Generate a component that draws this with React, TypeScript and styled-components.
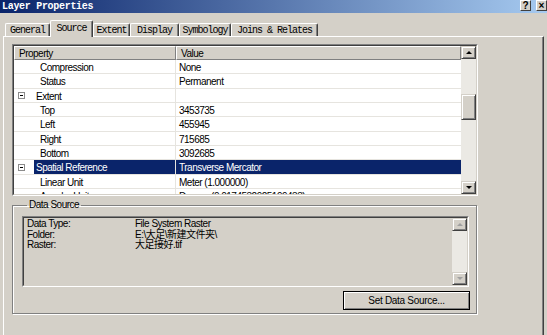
import styled, { createGlobalStyle, css } from "styled-components";

type PropRow = {
  label: string;
  value?: string;
  kind: "group" | "item";
  selected?: boolean;
};

const rows: PropRow[] = [
  { label: "Compression", value: "None", kind: "item" },
  { label: "Status", value: "Permanent", kind: "item" },
  { label: "Extent", kind: "group" },
  { label: "Top", value: "3453735", kind: "item" },
  { label: "Left", value: "455945", kind: "item" },
  { label: "Right", value: "715685", kind: "item" },
  { label: "Bottom", value: "3092685", kind: "item" },
  { label: "Spatial Reference", value: "Transverse Mercator", kind: "group", selected: true },
  { label: "Linear Unit", value: "Meter (1.000000)", kind: "item" },
  { label: "Angular Unit", value: "Degree (0.0174532925199433)", kind: "item" },
];

const tabs = [
  { name: "General", width: 45 },
  { name: "Source", width: 43, active: true },
  { name: "Extent", width: 37 },
  { name: "Display", width: 49 },
  { name: "Symbology", width: 52 },
  { name: "Joins & Relates", width: 87 },
];

const sourceInfo = [
  ["Data Type:", "File System Raster"],
  ["Folder:", "E:\\大足\\新建文件夹\\"],
  ["Raster:", "大足接好.tif"],
];

const App = () => {
  return (
    <>
      <GlobalStyle />
      <Dialog>
        <TitleBar>
          <Title>Layer Properties</Title>
          <CaptionButtons>
            <CaptionButton>?</CaptionButton>
            <CaptionButton>×</CaptionButton>
          </CaptionButtons>
        </TitleBar>

        <TabStrip>
          {tabs.map(tab => (
            <Tab key={tab.name} $w={tab.width} $active={tab.active}>
              {tab.name}
            </Tab>
          ))}
        </TabStrip>

        <Panel>
          <GridFrame>
            <GridInner>
              <GridList>
                <HeaderRow>
                  <HeaderCell>Property</HeaderCell>
                  <HeaderCell>Value</HeaderCell>
                </HeaderRow>
                {rows.map(row => (
                  <Row key={row.label}>
                    <NameCell>
                      <ToggleSlot>{row.kind === "group" && <Expander />}</ToggleSlot>
                      <NameText $group={row.kind === "group"} $selected={row.selected}>
                        {row.label}
                      </NameText>
                    </NameCell>
                    <ValueCell $selected={row.selected}>{row.value}</ValueCell>
                  </Row>
                ))}
              </GridList>
              <ScrollBar>
                <ScrollButton>
                  <Arrow $dir="up" />
                </ScrollButton>
                <Thumb />
                <ScrollTrack />
                <ScrollButton>
                  <Arrow $dir="down" />
                </ScrollButton>
              </ScrollBar>
            </GridInner>
          </GridFrame>

          <GroupBox>
            <GroupLegend>Data Source</GroupLegend>
            <InfoFrame>
              <InfoInner>
                <InfoText>
                  {sourceInfo.map(([k, v]) => (
                    <InfoLine key={k}>
                      <span>{k}</span>
                      <span>{v}</span>
                    </InfoLine>
                  ))}
                </InfoText>
                <ScrollBar>
                  <ScrollButton>
                    <Arrow $dir="up" $disabled />
                  </ScrollButton>
                  <ScrollTrack />
                  <ScrollButton>
                    <Arrow $dir="down" $disabled />
                  </ScrollButton>
                </ScrollBar>
              </InfoInner>
            </InfoFrame>
            <SetButton>Set Data Source...</SetButton>
          </GroupBox>
        </Panel>
      </Dialog>
    </>
  );
};

const GlobalStyle = createGlobalStyle`
  html, body {
    margin: 0;
    padding: 0;
  }
  body {
    background: #d4d0c8;
    font-family: "Liberation Sans", "Noto Sans CJK SC", sans-serif;
  }
`;

const uiText = css`
  font-family: "Liberation Sans", "Noto Sans CJK SC", sans-serif;
  font-size: 10px;
  letter-spacing: -0.5px;
  color: #000;
`;

const Dialog = styled.div`
  width: 547px;
  height: 335px;
  overflow: hidden;
  background: #d4d0c8;
  display: flex;
  flex-direction: column;
`;

const TitleBar = styled.div`
  height: 13px;
  flex: none;
  display: flex;
  align-items: center;
  justify-content: space-between;
  padding-left: 2px;
  background: linear-gradient(to right, #0a246a, #a6caf0);
`;

const Title = styled.span`
  font-family: "Liberation Mono", monospace;
  font-weight: bold;
  font-size: 10px;
  letter-spacing: -0.3px;
  color: #fff;
`;

const CaptionButtons = styled.div`
  display: flex;
  gap: 5px;
  align-self: flex-start;
`;

const CaptionButton = styled.div`
  width: 11px;
  height: 11px;
  box-sizing: border-box;
  background: #d4d0c8;
  border: 1px solid;
  border-color: #fff #404040 #404040 #fff;
  display: flex;
  align-items: center;
  justify-content: center;
  font: bold 10px "Liberation Sans", sans-serif;
  line-height: 1;
  color: #000;
`;

const TabStrip = styled.div`
  height: 23px;
  flex: none;
  display: flex;
  align-items: flex-end;
  padding-left: 5px;
  position: relative;
  z-index: 1;
`;

const Tab = styled.div<{ $w: number; $active?: boolean }>`
  width: ${p => p.$w}px;
  height: ${p => (p.$active ? 17 : 13)}px;
  margin-bottom: ${p => (p.$active ? -1 : 0)}px;
  padding-bottom: ${p => (p.$active ? 2 : 0)}px;
  box-sizing: border-box;
  background: #d4d0c8;
  border-top: 1px solid #fff;
  border-left: 1px solid #fff;
  border-right: 1px solid #404040;
  border-radius: 2px 2px 0 0;
  box-shadow: inset -1px 0 #808080;
  display: flex;
  align-items: center;
  justify-content: center;
  font-family: "Liberation Mono", monospace;
  font-size: 10px;
  letter-spacing: -1px;
  white-space: nowrap;
  color: #000;
`;

const Panel = styled.div`
  margin-left: 3px;
  width: 541px;
  flex: 1;
  box-sizing: border-box;
  border-top: 1px solid #fff;
  border-left: 1px solid #fff;
  border-right: 1px solid #404040;
  box-shadow: inset -1px 0 #808080;
  padding: 7px 0 0 8px;
  display: flex;
  flex-direction: column;
  align-items: flex-start;
`;

const GridFrame = styled.div`
  width: 466px;
  height: 152px;
  box-sizing: border-box;
  border: 1px solid;
  border-color: #808080 #fff #fff #808080;
`;

const GridInner = styled.div`
  height: 100%;
  box-sizing: border-box;
  border: 1px solid;
  border-color: #404040 #d4d0c8 #d4d0c8 #404040;
  display: grid;
  grid-template-columns: 1fr 15px;
  background: #fff;
`;

const GridList = styled.div`
  overflow: hidden;
  ${uiText};
`;

const HeaderRow = styled.div`
  height: 14px;
  display: grid;
  grid-template-columns: 162px 1fr;
  background: #d4d0c8;
`;

const HeaderCell = styled.div`
  box-sizing: border-box;
  padding: 1px 0 0 4px;
  line-height: 11px;
  border-top: 1px solid #fff;
  border-left: 1px solid #fff;
  border-right: 1px solid #808080;
  border-bottom: 1px solid #808080;
`;

const Row = styled.div`
  height: 14.33px;
  box-sizing: border-box;
  display: grid;
  grid-template-columns: 162px 1fr;
  border-bottom: 1px solid #e6e4df;
  white-space: nowrap;
`;

const NameCell = styled.div`
  display: flex;
  border-right: 1px solid #e6e4df;
`;

const ToggleSlot = styled.div`
  width: 20px;
  flex: none;
  display: flex;
  align-items: center;
  padding: 1px 0 0 4px;
  box-sizing: border-box;
`;

const Expander = styled.span`
  width: 7px;
  height: 7px;
  box-sizing: border-box;
  border: 1px solid #8c8c8c;
  background: #fff;
  display: flex;
  align-items: center;
  justify-content: center;

  &::after {
    content: "";
    width: 3px;
    height: 1px;
    background: #000;
  }
`;

const NameText = styled.div<{ $group?: boolean; $selected?: boolean }>`
  flex: 1;
  padding: 3px 0 0 ${p => (p.$group ? 2 : 6)}px;
  line-height: 10px;
  background: ${p => (p.$selected ? "#0a246a" : "transparent")};
  color: ${p => (p.$selected ? "#fff" : "#000")};
`;

const ValueCell = styled.div<{ $selected?: boolean }>`
  padding: 3px 0 0 3px;
  line-height: 10px;
  background: ${p => (p.$selected ? "#0a246a" : "transparent")};
  color: ${p => (p.$selected ? "#fff" : "#000")};
`;

const ScrollBar = styled.div`
  width: 15px;
  display: flex;
  flex-direction: column;
  background: #ebe9e4;
`;

const raised = css`
  box-sizing: border-box;
  background: #d4d0c8;
  border: 1px solid;
  border-color: #d4d0c8 #404040 #404040 #d4d0c8;
  box-shadow: inset 1px 1px #fff, inset -1px -1px #808080;
`;

const ScrollButton = styled.div`
  ${raised};
  height: 13px;
  flex: none;
  display: flex;
  align-items: center;
  justify-content: center;
`;

const Arrow = styled.span<{ $dir: "up" | "down"; $disabled?: boolean }>`
  width: 0;
  height: 0;
  border-left: 3px solid transparent;
  border-right: 3px solid transparent;
  ${p =>
    p.$dir === "up"
      ? css`border-bottom: 3px solid ${p.$disabled ? "#a0a0a0" : "#000"};`
      : css`border-top: 3px solid ${p.$disabled ? "#a0a0a0" : "#000"};`}
`;

const Thumb = styled.div`
  ${raised};
  height: 26px;
  flex: none;
  margin-top: 35px;
`;

const ScrollTrack = styled.div`
  flex: 1;
`;

const GroupBox = styled.fieldset`
  width: 465px;
  box-sizing: border-box;
  margin: 3px 0 0;
  padding: 5px 7px 3px 9px;
  border: 1px solid #808080;
  box-shadow: 1px 1px 0 #fff, inset 1px 1px 0 #fff;
  display: flex;
  flex-direction: column;
  min-width: 0;
`;

const GroupLegend = styled.legend`
  ${uiText};
  margin-left: 5px;
  padding: 0 2px;
  line-height: 12px;
`;

const InfoFrame = styled.div`
  width: 447px;
  height: 71px;
  box-sizing: border-box;
  border: 1px solid;
  border-color: #808080 #fff #fff #808080;
`;

const InfoInner = styled.div`
  height: 100%;
  box-sizing: border-box;
  border: 1px solid;
  border-color: #404040 #d4d0c8 #d4d0c8 #404040;
  display: flex;
`;

const InfoText = styled.div`
  flex: 1;
  padding: 1px 0 0 3px;
  ${uiText};
`;

const InfoLine = styled.div`
  display: grid;
  grid-template-columns: 108px 1fr;
  line-height: 10.5px;
  white-space: nowrap;
`;

const SetButton = styled.button`
  ${uiText};
  letter-spacing: -0.3px;
  align-self: flex-end;
  margin: 4px -1px 0 0;
  width: 127px;
  height: 19px;
  padding: 0;
  background: #d4d0c8;
  border: 1px solid #000;
  box-shadow: inset 1px 1px #fff, inset -1px -1px #808080;
`;

export default App;
